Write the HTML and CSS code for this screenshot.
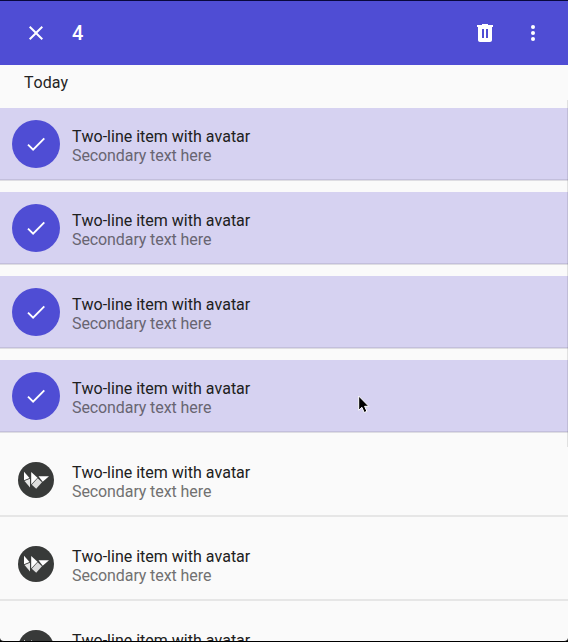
FILE: index.html
```
<!DOCTYPE html>
<html lang="en">
<head>
<meta charset="utf-8">
<title>Selection list</title>
<link rel="stylesheet" href="styles.css">
</head>
<body>
<svg class="defs" aria-hidden="true">
  <symbol id="check" viewBox="0 0 24 24"><path d="M4 12.6 9.1 17.6 20.3 6.4" fill="none" stroke="#fff" stroke-width="1.9"/></symbol>
  <symbol id="bird" viewBox="0 0 36 36">
    <circle cx="18" cy="18" r="18" fill="#383a39"/>
    <path d="M6 9.7V18.2L11.5 16z" fill="#fff"/>
    <path d="M6.5 19 12 16.8V25.5z" fill="#e6e6e6"/>
    <path d="M13.2 10V22.5L19.5 15.7z" fill="#fff"/>
    <path d="M13.8 22.8 19.7 16.3 24 20.2 18.2 26.7z" fill="#dedede"/>
    <path d="M20.5 14.3H31L24.7 19.7z" fill="#fff"/>
  </symbol>
</svg>
<div class="window">
  <header class="toolbar">
    <svg class="icon" viewBox="0 0 24 24"><path d="M19 6.4 17.6 5 12 10.6 6.4 5 5 6.4 10.6 12 5 17.6 6.4 19 12 13.4 17.6 19 19 17.6 13.4 12z"/></svg>
    <span class="count">4</span>
    <svg class="icon" viewBox="0 0 24 24"><path fill-rule="evenodd" d="M9 3v1H4v2h1v13c0 1.1.9 2 2 2h10c1.1 0 2-.9 2-2V6h1V4h-5V3H9zm0 5h2v9H9V8zm4 0h2v9h-2V8z"/></svg>
    <svg class="icon more" viewBox="0 0 24 24"><circle cx="12" cy="6" r="2"/><circle cx="12" cy="12" r="2"/><circle cx="12" cy="18" r="2"/></svg>
  </header>
  <main class="list">
    <h1 class="heading">Today</h1>
    <div class="item selected"><div class="avatar"><svg><use href="#check"/></svg></div><div class="text"><p>Two-line item with avatar</p><p class="secondary">Secondary text here</p></div></div>
    <div class="item selected"><div class="avatar"><svg><use href="#check"/></svg></div><div class="text"><p>Two-line item with avatar</p><p class="secondary">Secondary text here</p></div></div>
    <div class="item selected"><div class="avatar"><svg><use href="#check"/></svg></div><div class="text"><p>Two-line item with avatar</p><p class="secondary">Secondary text here</p></div></div>
    <div class="item selected"><div class="avatar"><svg><use href="#check"/></svg></div><div class="text"><p>Two-line item with avatar</p><p class="secondary">Secondary text here</p></div></div>
    <div class="item"><div class="avatar"><svg><use href="#bird"/></svg></div><div class="text"><p>Two-line item with avatar</p><p class="secondary">Secondary text here</p></div></div>
    <div class="item"><div class="avatar"><svg><use href="#bird"/></svg></div><div class="text"><p>Two-line item with avatar</p><p class="secondary">Secondary text here</p></div></div>
    <div class="item"><div class="avatar"><svg><use href="#bird"/></svg></div><div class="text"><p>Two-line item with avatar</p></div></div>
  </main>
  <div class="scrollbar"></div>
  <svg class="cursor" viewBox="0 0 12 19"><path d="M.7 1v14.3l3.2-3 2.3 5.2 2.7-1.2-2.3-5h4.2z" fill="#000" stroke="#fff" stroke-width="1"/></svg>
</div>
</body>
</html>
```
FILE: styles.css
```
* { box-sizing: border-box; }
body { margin: 0; background: #000; font: 16px/19px Roboto, sans-serif; font-kerning: none; }
p { margin: 0; }
.defs { position: absolute; width: 0; height: 0; }
.window {
  position: relative;
  height: 642px;
  overflow: hidden;
  border-top: 1px solid #08083c;
  border-bottom: 1px solid #000;
  border-radius: 0 0 4px 4px;
  background: #fafafa;
}
.toolbar {
  display: flex;
  align-items: center;
  height: 64px;
  padding: 0 23px 0 24px;
  background: #4f4dd4;
  color: #fff;
}
.icon { width: 24px; height: 24px; fill: #fff; }
.count { flex: 1; margin-left: 24px; font-size: 20px; font-weight: 500; line-height: 24px; }
.more { margin-left: 24px; }
.list { display: flex; flex-direction: column; gap: 11px; }
.heading { height: 32px; margin: 0; padding: 8px 24px 0; font-size: 16px; font-weight: 400; line-height: 19px; color: #242424; }
.item { display: flex; flex: none; align-items: flex-start; height: 73px; padding: 12px 0 0 12px; border-bottom: 2px solid #e6e6e6; color: #202020; }
.avatar { display: grid; place-items: center; width: 48px; height: 48px; margin-right: 12px; border-radius: 50%; }
.avatar svg { width: 36px; height: 36px; }
.selected { border-bottom: 1px solid #dedde2; background: #d6d2f1; box-shadow: inset 0 -1px #c3bfdc; }
.selected .avatar { background: #4f4dd4; }
.selected .avatar svg { width: 24px; height: 24px; }
.text { padding-top: 7px; }
.secondary { color: #717171; letter-spacing: -.09px; }
.selected .secondary { color: #686572; }
.scrollbar { position: absolute; right: 0; top: 99px; width: 1px; height: 347px; background: rgba(0, 0, 0, .1); }
.cursor { position: absolute; left: 358px; top: 394px; width: 12px; height: 19px; }
```
